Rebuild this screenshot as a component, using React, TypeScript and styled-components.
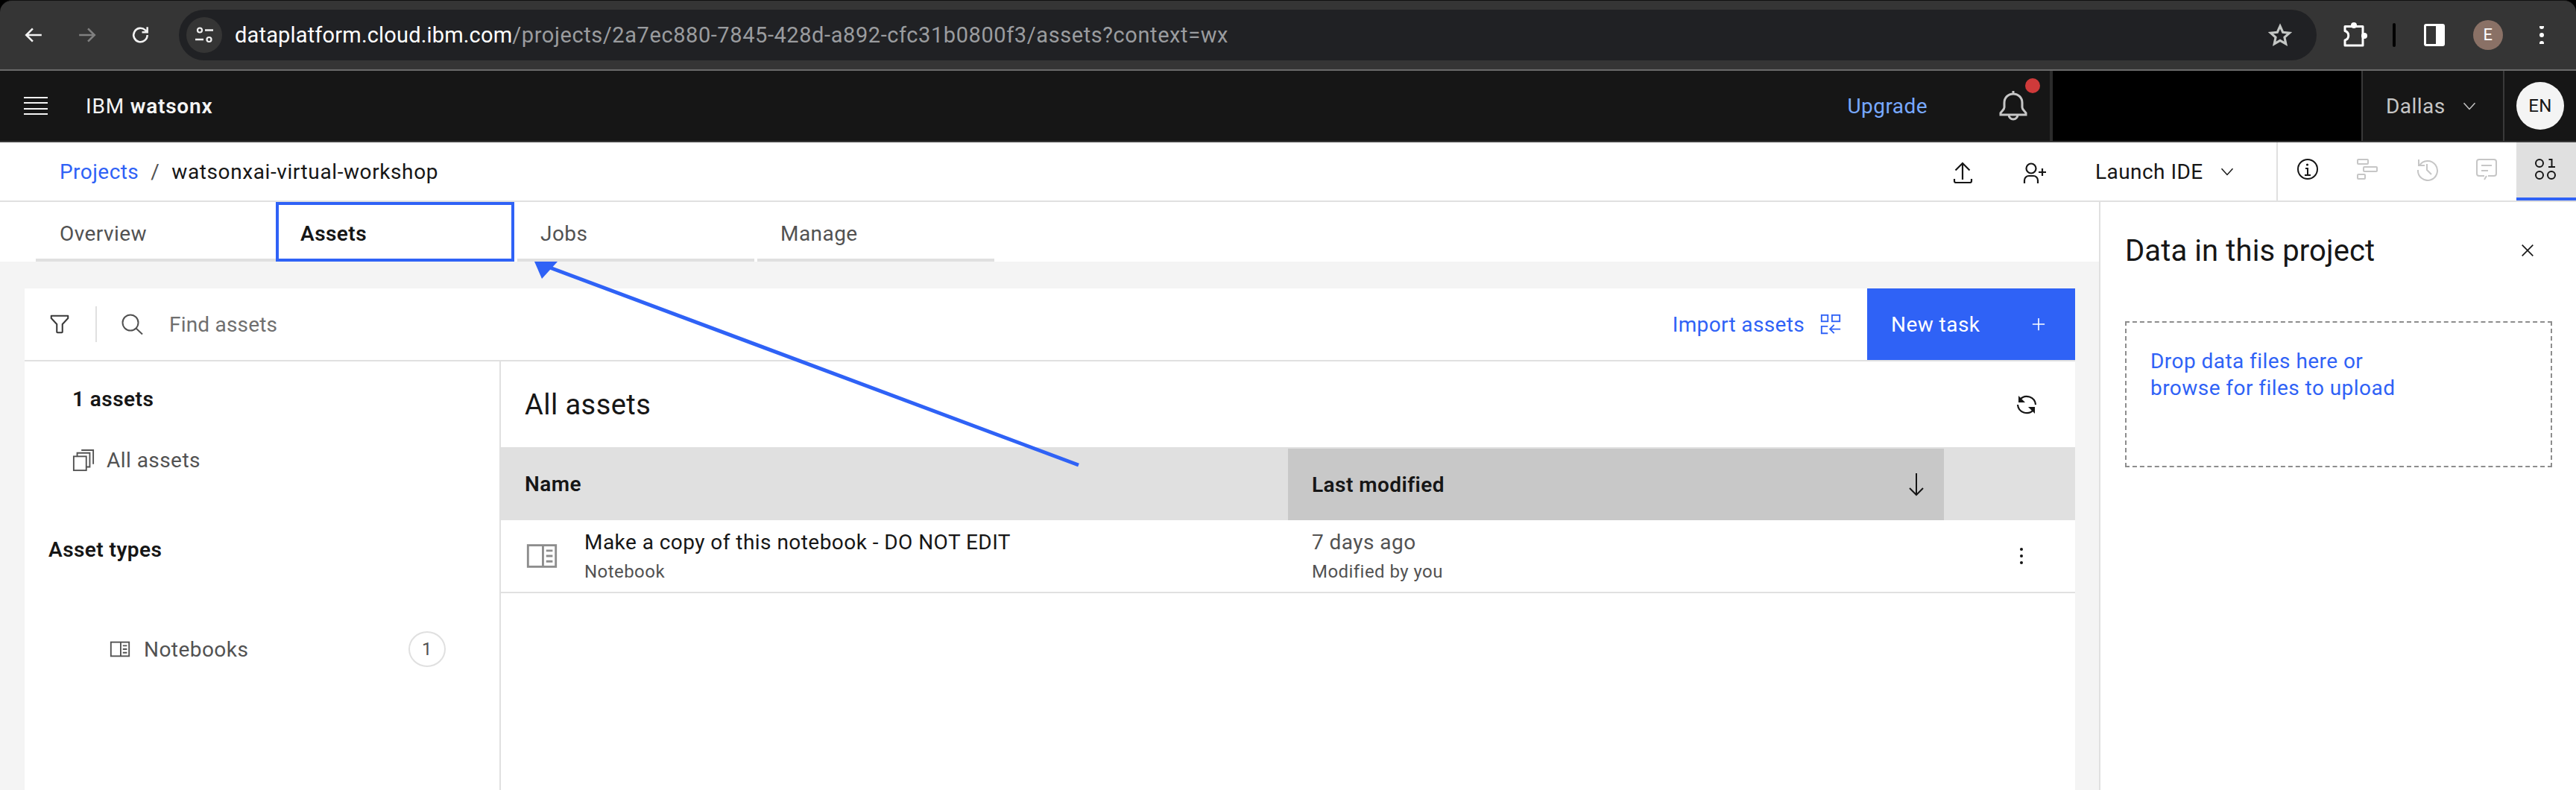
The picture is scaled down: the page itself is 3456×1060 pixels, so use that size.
import React from 'react'
import styled, { createGlobalStyle } from 'styled-components'

const BLUE = '#2f62f6'
const PLEX = `Roboto, 'Liberation Sans', sans-serif`

const GlobalStyle = createGlobalStyle`
	html, body {
		margin: 0;
		padding: 0;
		background: #ffffff;
	}
	* {
		box-sizing: border-box;
	}
`

type GlyphProps = { size: number; vb?: number; color?: string; children: React.ReactNode }

const Glyph = ({ size, vb = 32, color = 'currentColor', children }: GlyphProps) => (
	<GlyphSvg
		width={size}
		height={size}
		viewBox={`0 0 ${vb} ${vb}`}
		fill="none"
		stroke={color}
		strokeWidth={2}
	>
		{children}
	</GlyphSvg>
)

const NotebookGlyph = ({ size, color }: { size: number; color: string }) => (
	<Glyph size={size} color={color}>
		<rect x="3" y="6" width="26" height="20" />
		<path d="M17 6v20M20 11h6M20 16h6M20 21h6" />
	</Glyph>
)

const ChevronGlyph = ({ color = '#161616' }: { color?: string }) => (
	<Glyph size={24} color={color}>
		<path d="M6 11l10 11 10-11" />
	</Glyph>
)

const BrowserBar = () => (
	<Browser>
		<NavIcons>
			<Glyph size={26} vb={24} color="#f1f1f1">
				<path d="M22 12H3M11 4l-8 8 8 8" strokeWidth={2.4} />
			</Glyph>
			<Glyph size={26} vb={24} color="#808080">
				<path d="M2 12h19M13 4l8 8-8 8" strokeWidth={2.4} />
			</Glyph>
			<Glyph size={26} vb={24} color="#f1f1f1">
				<path d="M20 12a8.5 8.5 0 1 1-2.6-6.1L20 8.4M20 2v6.6h-6.6" strokeWidth={2.4} />
			</Glyph>
		</NavIcons>
		<Omnibox>
			<SiteControl>
				<Glyph size={26} vb={26} color="#f1f1f1">
					<circle cx="7" cy="6.5" r="3" strokeWidth={2.2} />
					<path d="M14 6.5h11M1 19h11" strokeWidth={2.6} />
					<circle cx="19.5" cy="19" r="3" strokeWidth={2.2} />
				</Glyph>
			</SiteControl>
			<UrlText>
				<UrlHost>dataplatform.cloud.ibm.com</UrlHost>
				<UrlPath>/projects/2a7ec880-7845-428d-a892-cfc31b0800f3/assets?context=wx</UrlPath>
			</UrlText>
			<StarSlot>
				<Glyph size={34} vb={24} color="#c4c7c5">
					<path d="M12 3.5l2.6 5.8 6.3.7-4.7 4.2 1.3 6.2-5.5-3.2-5.5 3.2 1.3-6.2L3.1 10l6.3-.7z" strokeWidth={2.2} />
				</Glyph>
			</StarSlot>
		</Omnibox>
		<BrowserActions>
			<Glyph size={36} vb={36} color="#ffffff">
				<path d="M4 6.5H28V32H4V25a6.5 6.5 0 0 0 0-12.5z" strokeWidth={3} strokeLinejoin="round" />
				<circle cx="16" cy="5" r="4" fill="#fff" stroke="none" />
				<circle cx="30" cy="19" r="4" fill="#fff" stroke="none" />
			</Glyph>
			<ToolbarSep />
			<SidePanelIcon />
			<Avatar>E</Avatar>
			<Glyph size={24} vb={24} color="#ffffff">
				<circle cx="12" cy="1" r="3" fill="#fff" stroke="none" />
				<circle cx="12" cy="12" r="3" fill="#fff" stroke="none" />
				<circle cx="12" cy="23" r="3" fill="#fff" stroke="none" />
			</Glyph>
		</BrowserActions>
	</Browser>
)

const TopHeader = () => (
	<Header>
		<Hamburger>
			<span />
			<span />
			<span />
			<span />
		</Hamburger>
		<Brand>
			IBM <strong>watsonx</strong>
		</Brand>
		<UpgradeLink>Upgrade</UpgradeLink>
		<BellSlot>
			<Glyph size={48} vb={48} color="#c6c6c6">
				<path
					d="M24 8c-7 0-12 5-12 12v6c0 3-3 4.5-5 7.5v2.5h34v-2.5c-2-3-5-4.5-5-7.5v-6c0-7-5-12-12-12zM24 4v4M18 36a6 6 0 0 0 12 0"
					strokeWidth={3}
				/>
			</Glyph>
			<BellDot />
		</BellSlot>
		<BlackedOut />
		<RegionCell>
			Dallas
			<ChevronGlyph color="#c6c6c6" />
		</RegionCell>
		<ProfileCell>
			<ProfileBadge>EN</ProfileBadge>
		</ProfileCell>
	</Header>
)

const CrumbBar = () => (
	<Crumbs>
		<CrumbLink>Projects</CrumbLink>
		<CrumbSep>/</CrumbSep>
		<CrumbName>watsonxai-virtual-workshop</CrumbName>
		<CrumbActions>
			<Glyph size={32}>
				<path d="M16 27V5M6.5 14.5L16 5l9.5 9.5M5 26v3a2 2 0 0 0 2 2h19a2 2 0 0 0 2-2v-3" strokeWidth={2.2} />
			</Glyph>
			<Glyph size={32}>
				<circle cx="11" cy="12" r="6.5" strokeWidth={2.2} />
				<path d="M2 32v-4a6 6 0 0 1 6-6h6a6 6 0 0 1 6 6v4M26 12v10M21 17h10" strokeWidth={2.2} />
			</Glyph>
			<LaunchButton>
				Launch IDE
				<ChevronGlyph />
			</LaunchButton>
		</CrumbActions>
		<PanelTabs>
			<PanelTab>
				<Glyph size={32}>
					<circle cx="16" cy="16" r="13" />
					<path d="M12 24h8M16 24v-9h-3" />
					<circle cx="15.5" cy="10" r="1.6" fill="#161616" stroke="none" />
				</Glyph>
			</PanelTab>
			<PanelTab>
				<Glyph size={32} color="#c6c6c6">
					<rect x="3" y="3" width="14" height="6" rx="1" />
					<rect x="11" y="13" width="18" height="6" rx="1" />
					<rect x="3" y="23" width="10" height="6" rx="1" />
				</Glyph>
			</PanelTab>
			<PanelTab>
				<Glyph size={32} color="#c6c6c6">
					<path d="M5 3v8h8M6 11a13 13 0 1 1-2 6M16 9v8l6 6" />
				</Glyph>
			</PanelTab>
			<PanelTab>
				<Glyph size={32} color="#c6c6c6">
					<path d="M16 25l-3 5M13 25H6a3 3 0 0 1-3-3V6a3 3 0 0 1 3-3h20a3 3 0 0 1 3 3v16a3 3 0 0 1-3 3h-8M9 11h14M9 18h9" />
				</Glyph>
			</PanelTab>
			<PanelTab $active>
				<Glyph size={32}>
					<circle cx="7" cy="8" r="5" />
					<circle cx="7" cy="24" r="5" />
					<circle cx="23" cy="24" r="5" />
					<path d="M19 13h9M23.5 13V3h-4" />
				</Glyph>
			</PanelTab>
		</PanelTabs>
	</Crumbs>
)

const AssetsToolbar = () => (
	<Toolbar>
		<FilterSlot>
			<Glyph size={30} color="#393939">
				<path
					d="M4 4h24v3.5l-8 8.5v11a1 1 0 0 1-1 1h-6a1 1 0 0 1-1-1V16L4 7.5z"
					strokeWidth={2.2}
					strokeLinejoin="round"
				/>
			</Glyph>
		</FilterSlot>
		<SearchSlot>
			<Glyph size={32} color="#525252">
				<circle cx="12" cy="14" r="10.5" />
				<path d="M19.5 21.5L28 29.5" />
			</Glyph>
		</SearchSlot>
		<FindText>Find assets</FindText>
		<ImportLink>
			Import assets
			<Glyph size={30} color={BLUE}>
				<rect x="3" y="3" width="9" height="9" />
				<rect x="18" y="3" width="11" height="9" />
				<path d="M12 19H3v10h9M30 23H15M21 17l-6 6 6 6" />
			</Glyph>
		</ImportLink>
		<NewTaskButton>
			New task
			<Glyph size={26} color="#ffffff">
				<path d="M16 6v20M6 16h20" />
			</Glyph>
		</NewTaskButton>
	</Toolbar>
)

const Sidebar = () => (
	<Side>
		<AssetCount>1 assets</AssetCount>
		<AllAssetsRow>
			<Glyph size={30} color="#525252">
				<rect x="2" y="10" width="18" height="20" />
				<path d="M7 10V5h18v20h-5M13 1h17v20" />
			</Glyph>
			All assets
		</AllAssetsRow>
		<AssetTypes>Asset types</AssetTypes>
		<TypeRow>
			<NotebookGlyph size={30} color="#525252" />
			<TypeName>Notebooks</TypeName>
			<CountBadge>1</CountBadge>
		</TypeRow>
	</Side>
)

const AssetsTable = () => (
	<TablePane>
		<TableTitle>
			All assets
			<Glyph size={32}>
				<path d="M7 9a12 12 0 0 1 21 7M25 23a12 12 0 0 1-21-7" strokeWidth={2.2} />
				<path d="M5 4v9h9z" fill="#161616" stroke="none" />
				<path d="M27 28v-9h-9z" fill="#161616" stroke="none" />
			</Glyph>
		</TableTitle>
		<HeadRow>
			<NameHead>Name</NameHead>
			<SortedHead>
				Last modified
				<Glyph size={32}>
					<path d="M16 1v29M7 21l9 9 9-9" />
				</Glyph>
			</SortedHead>
		</HeadRow>
		<AssetRow>
			<NotebookCell>
				<NotebookGlyph size={46} color="#8d8d8d" />
				<div>
					<RowTitle>Make a copy of this notebook - DO NOT EDIT</RowTitle>
					<RowSub>Notebook</RowSub>
				</div>
			</NotebookCell>
			<ModifiedCell>
				<RowDate>7 days ago</RowDate>
				<RowSub>Modified by you</RowSub>
			</ModifiedCell>
			<KebabCell>
				<span />
				<span />
				<span />
			</KebabCell>
		</AssetRow>
	</TablePane>
)

const PointerArrow = () => (
	<ArrowLayer width={3456} height={1060} viewBox="0 0 3456 1060">
		<path d="M1447 624L735 358" stroke={BLUE} strokeWidth={5} fill="none" />
		<path d="M717 351L748 351L727 374z" fill={BLUE} />
	</ArrowLayer>
)

const App = () => (
	<Page>
		<GlobalStyle />
		<BrowserBar />
		<TopHeader />
		<CrumbBar />
		<Body>
			<MainColumn>
				<Tabs>
					<Tab>Overview</Tab>
					<Tab $selected>Assets</Tab>
					<Tab>Jobs</Tab>
					<Tab>Manage</Tab>
				</Tabs>
				<Canvas>
					<Card>
						<AssetsToolbar />
						<CardBody>
							<Sidebar />
							<AssetsTable />
						</CardBody>
					</Card>
				</Canvas>
			</MainColumn>
			<DataPanel>
				<PanelHead>
					Data in this project
					<Glyph size={26}>
						<path d="M7 7l18 18M25 7L7 25" />
					</Glyph>
				</PanelHead>
				<DropZone>
					Drop data files here or
					<br />
					browse for files to upload
				</DropZone>
			</DataPanel>
		</Body>
		<PointerArrow />
	</Page>
)

const GlyphSvg = styled.svg`
	display: block;
	flex: none;
`

const Page = styled.div`
	position: relative;
	width: 3456px;
	height: 1060px;
	overflow: hidden;
	display: flex;
	flex-direction: column;
	font-family: ${PLEX};
	letter-spacing: 0.45px;
	color: #161616;
	background: #000;
`

const Browser = styled.div`
	height: 95px;
	flex: none;
	display: flex;
	align-items: center;
	padding: 0 30px 1px 32px;
	background: #353535;
	border-top: 1px solid #111;
	border-bottom: 2px solid #6a6a6a;
	border-radius: 16px 16px 0 0;
`

const NavIcons = styled.div`
	display: flex;
	gap: 46px;
	width: 208px;
	flex: none;
`

const Omnibox = styled.div`
	width: 2868px;
	height: 68px;
	flex: none;
	display: flex;
	align-items: center;
	padding: 0 32px 0 10px;
	background: #202124;
	border-radius: 34px;
`

const SiteControl = styled.div`
	width: 48px;
	height: 48px;
	flex: none;
	display: flex;
	align-items: center;
	justify-content: center;
	border-radius: 50%;
	background: #353535;
`

const UrlText = styled.div`
	margin-left: 17px;
	flex: 1;
	font-family: Roboto, sans-serif;
	font-size: 29px;
	letter-spacing: 0;
`

const UrlHost = styled.span`
	color: #ffffff;
	letter-spacing: 0.17px;
`

const UrlPath = styled.span`
	color: #9a9c9f;
	letter-spacing: 0.58px;
`

const StarSlot = styled.div`
	flex: none;
`

const BrowserActions = styled.div`
	display: flex;
	align-items: center;
	flex: none;
	margin-left: 34px;
	gap: 0;

	& > svg:last-child {
		margin-left: 40px;
	}
`

const ToolbarSep = styled.div`
	width: 4px;
	height: 32px;
	margin-left: 32px;
	background: #000;
	border-radius: 2px;
`

const SidePanelIcon = styled.div`
	width: 28px;
	height: 30px;
	margin-left: 38px;
	border: 3px solid #fff;
	border-radius: 3px;
	background: linear-gradient(90deg, transparent 60%, #fff 60%);
`

const Avatar = styled.div`
	width: 40px;
	height: 40px;
	margin-left: 38px;
	display: flex;
	align-items: center;
	justify-content: center;
	border-radius: 50%;
	background: #8a7166;
	color: #fff;
	font-size: 22px;
`

const Header = styled.div`
	height: 96px;
	flex: none;
	display: flex;
	align-items: center;
	background: #161616;
	border-bottom: 2px solid #393939;
	color: #f4f4f4;
`

const Hamburger = styled.div`
	width: 32px;
	height: 24px;
	margin-left: 32px;
	flex: none;
	display: flex;
	flex-direction: column;
	justify-content: space-between;

	span {
		height: 2px;
		background: #f4f4f4;
	}
`

const Brand = styled.div`
	margin-left: 51px;
	font-size: 28px;
	letter-spacing: 0.8px;

	strong {
		font-weight: 600;
	}
`

const UpgradeLink = styled.div`
	margin-left: auto;
	color: #78a9ff;
	font-size: 28px;
`

const BellSlot = styled.div`
	position: relative;
	margin-left: 91px;
	margin-right: 25px;
`

const BellDot = styled.div`
	position: absolute;
	top: -13px;
	right: -12px;
	width: 20px;
	height: 20px;
	border-radius: 50%;
	background: #cf3a3a;
`

const BlackedOut = styled.div`
	width: 420px;
	height: 94px;
	flex: none;
	background: #000;
	border-left: 4px solid #2b2b2b;
	border-right: 2px solid #393939;
`

const RegionCell = styled.div`
	width: 190px;
	height: 94px;
	flex: none;
	display: flex;
	align-items: center;
	gap: 20px;
	padding-left: 31px;
	color: #c6c6c6;
	font-size: 28px;
	border-right: 2px solid #393939;
`

const ProfileCell = styled.div`
	width: 96px;
	flex: none;
	display: flex;
	justify-content: center;
`

const ProfileBadge = styled.div`
	width: 64px;
	height: 64px;
	display: flex;
	align-items: center;
	justify-content: center;
	border-radius: 50%;
	background: #f4f4f4;
	color: #161616;
	font-size: 24px;
`

const Crumbs = styled.div`
	height: 80px;
	flex: none;
	display: flex;
	align-items: center;
	padding-left: 80px;
	background: #fff;
	border-bottom: 2px solid #e0e0e0;
	font-size: 28px;
`

const CrumbLink = styled.span`
	color: ${BLUE};
`

const CrumbSep = styled.span`
	margin: 0 16px;
	color: #525252;
`

const CrumbName = styled.span`
	letter-spacing: 0.6px;
`

const CrumbActions = styled.div`
	margin-left: auto;
	display: flex;
	align-items: center;
	gap: 65px;
`

const LaunchButton = styled.div`
	display: flex;
	align-items: center;
	gap: 20px;
	width: 243px;
`

const PanelTabs = styled.div`
	align-self: stretch;
	display: flex;
	border-left: 2px solid #e0e0e0;
`

const PanelTab = styled.div<{ $active?: boolean }>`
	width: 80px;
	display: flex;
	align-items: center;
	justify-content: center;
	padding-bottom: 2px;
	background: ${(props) => (props.$active ? '#e0e0e0' : 'transparent')};
	border-bottom: 4px solid ${(props) => (props.$active ? BLUE : 'transparent')};
`

const Body = styled.div`
	flex: 1;
	min-height: 0;
	display: flex;
`

const MainColumn = styled.div`
	flex: 1;
	min-width: 0;
	display: flex;
	flex-direction: column;
	background: #f4f4f4;
`

const Tabs = styled.div`
	height: 80px;
	flex: none;
	display: flex;
	padding-left: 48px;
	background: #fff;
`

const Tab = styled.div<{ $selected?: boolean }>`
	width: ${(props) => (props.$selected ? '320px' : '318px')};
	display: flex;
	align-items: center;
	padding-left: ${(props) => (props.$selected ? '29px' : '31px')};
	padding-top: ${(props) => (props.$selected ? '4px' : '8px')};
	margin-right: 4px;
	font-size: 28px;
	font-weight: ${(props) => (props.$selected ? 600 : 400)};
	color: ${(props) => (props.$selected ? '#161616' : '#525252')};
	border: ${(props) => (props.$selected ? `4px solid ${BLUE}` : 'none')};
	border-bottom: 4px solid ${(props) => (props.$selected ? BLUE : '#e0e0e0')};

	&:first-child {
		width: 322px;
		margin-right: 0;
		padding-left: 32px;
	}
`

const Canvas = styled.div`
	flex: 1;
	min-height: 0;
	padding: 36px 32px 0 33px;
`

const Card = styled.div`
	height: 100%;
	display: flex;
	flex-direction: column;
	background: #fff;
`

const Toolbar = styled.div`
	height: 98px;
	flex: none;
	display: flex;
	align-items: center;
	border-bottom: 2px solid #e0e0e0;
`

const FilterSlot = styled.div`
	width: 97px;
	height: 48px;
	display: flex;
	align-items: center;
	padding-left: 32px;
	border-right: 2px solid #e0e0e0;
`

const SearchSlot = styled.div`
	margin-left: 33px;
`

const FindText = styled.div`
	margin-left: 32px;
	font-size: 28px;
	letter-spacing: 0.2px;
	color: #6f6f6f;
`

const ImportLink = styled.div`
	margin-left: auto;
	display: flex;
	align-items: center;
	gap: 20px;
	margin-right: 34px;
	font-size: 28px;
	letter-spacing: 0.35px;
	color: ${BLUE};
`

const NewTaskButton = styled.div`
	width: 279px;
	height: 96px;
	align-self: flex-start;
	display: flex;
	align-items: center;
	justify-content: space-between;
	padding: 0 36px 0 32px;
	background: ${BLUE};
	color: #fff;
	font-size: 28px;
`

const CardBody = styled.div`
	flex: 1;
	min-height: 0;
	display: flex;
`

const Side = styled.div`
	width: 639px;
	flex: none;
	border-right: 2px solid #e0e0e0;
`

const AssetCount = styled.div`
	margin: 35px 0 0 64px;
	font-size: 28px;
	font-weight: 600;
	line-height: 32px;
`

const AllAssetsRow = styled.div`
	margin: 50px 0 0 64px;
	display: flex;
	align-items: center;
	gap: 16px;
	font-size: 28px;
	line-height: 32px;
	color: #525252;
`

const AssetTypes = styled.div`
	margin: 88px 0 0 32px;
	font-size: 28px;
	font-weight: 600;
	line-height: 32px;
`

const TypeRow = styled.div`
	margin: 93px 72px 0 113px;
	display: flex;
	align-items: center;
	gap: 17px;
	font-size: 28px;
	color: #525252;
`

const TypeName = styled.span`
	flex: 1;
`

const CountBadge = styled.div`
	width: 50px;
	height: 48px;
	display: flex;
	align-items: center;
	justify-content: center;
	border: 2px solid #e0e0e0;
	border-radius: 50%;
	font-size: 24px;
`

const TablePane = styled.div`
	flex: 1;
	min-width: 0;
`

const TableTitle = styled.div`
	height: 115px;
	display: flex;
	align-items: center;
	justify-content: space-between;
	padding: 0 49px 0 32px;
	font-size: 38px;
`

const HeadRow = styled.div`
	height: 98px;
	display: grid;
	grid-template-columns: 1056px 880px 1fr;
	background: #e0e0e0;
`

const NameHead = styled.div`
	display: flex;
	align-items: center;
	padding-left: 32px;
	font-size: 28px;
	font-weight: 600;
`

const SortedHead = styled.div`
	margin-top: 2px;
	display: flex;
	align-items: center;
	justify-content: space-between;
	padding: 0 21px 0 32px;
	background: #c8c8c8;
	font-size: 28px;
	font-weight: 600;
`

const AssetRow = styled.div`
	height: 98px;
	display: grid;
	grid-template-columns: 1056px 880px 1fr;
	border-bottom: 2px solid #e0e0e0;
`

const NotebookCell = styled.div`
	display: flex;
	align-items: center;
	gap: 34px;
	padding-left: 32px;
`

const RowTitle = styled.div`
	font-size: 28px;
	line-height: 36px;
`

const RowSub = styled.div`
	font-size: 24px;
	line-height: 32px;
	margin-top: 5px;
	color: #525252;
`

const ModifiedCell = styled.div`
	display: flex;
	flex-direction: column;
	justify-content: center;
	padding-left: 32px;
`

const RowDate = styled.div`
	font-size: 28px;
	line-height: 36px;
	color: #525252;
`

const KebabCell = styled.div`
	display: flex;
	flex-direction: column;
	align-items: center;
	justify-content: center;
	gap: 5px;
	padding-left: 32px;

	span {
		width: 4px;
		height: 4px;
		border-radius: 50%;
		background: #161616;
	}
`

const DataPanel = styled.div`
	width: 640px;
	flex: none;
	padding-left: 33px;
	padding-right: 32px;
	background: #fff;
	border-left: 2px solid #e0e0e0;
`

const PanelHead = styled.div`
	height: 130px;
	display: flex;
	align-items: center;
	justify-content: space-between;
	padding: 0 20px 0 0;
	font-size: 40px;
	letter-spacing: 0.1px;
`

const DropZone = styled.div`
	height: 196px;
	margin-top: 30px;
	padding: 34px 32px;
	border: 2px dashed #8d8d8d;
	color: ${BLUE};
	font-size: 28px;
	line-height: 36px;
`

const ArrowLayer = styled.svg`
	position: absolute;
	top: 0;
	left: 0;
	pointer-events: none;
`

export default App
